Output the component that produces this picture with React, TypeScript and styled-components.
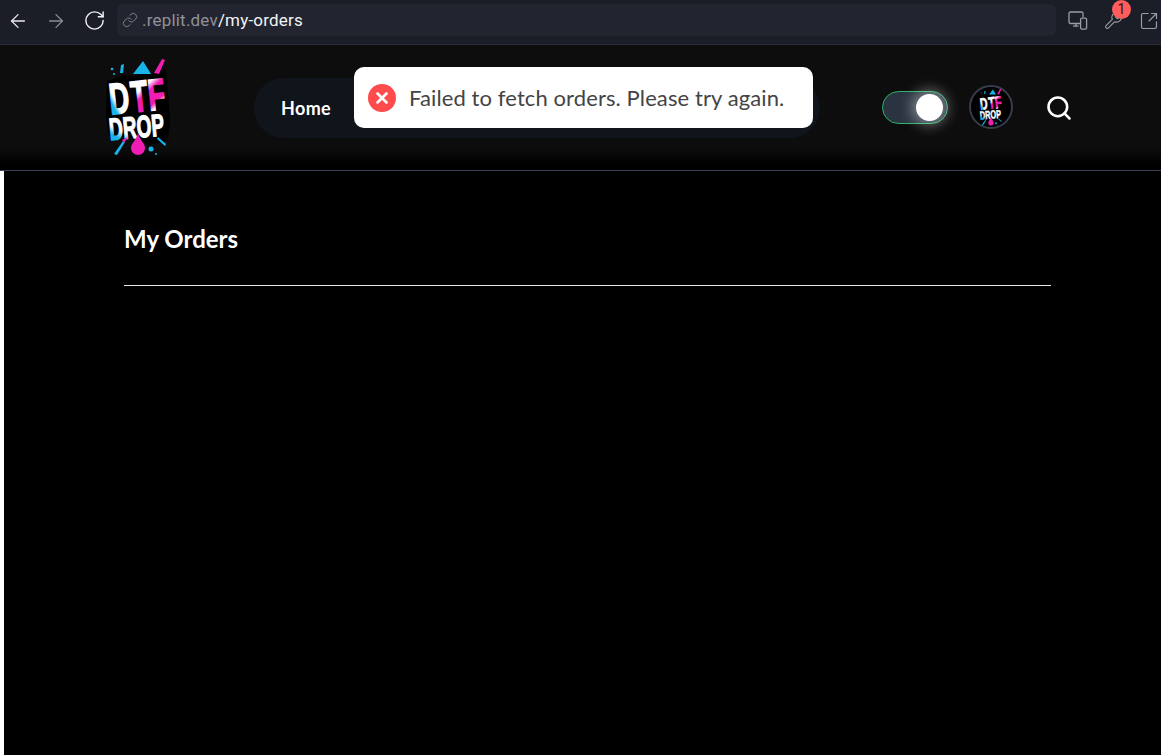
import React from "react";
import styled, { createGlobalStyle } from "styled-components";
import {
  ArrowLeft,
  ArrowRight,
  Link,
  RotateCw,
  Search,
  SquareArrowOutUpRight,
  Wrench,
  X,
} from "lucide-react";

const GlobalStyle = createGlobalStyle`
  html, body {
    margin: 0;
    padding: 0;
    height: 100%;
    background: #000;
    overflow: hidden;
  }
  * {
    box-sizing: border-box;
  }
`;

const logoFont = "'Liberation Sans Narrow', 'Liberation Sans', sans-serif";

const Logo = ({ size, prefix }: { size: number; prefix: string }) => (
  <LogoSvg width={size} height={size * (100 / 68)} viewBox="0 0 68 100">
    <defs>
      <linearGradient id={`${prefix}-d`} x1="1" y1="0" x2="0" y2="1">
        <stop offset="0.62" stopColor="#fff" />
        <stop offset="0.74" stopColor="#19b4ea" />
      </linearGradient>
      <linearGradient id={`${prefix}-t`} x1="0" y1="0" x2="0.5" y2="1">
        <stop offset="0.42" stopColor="#fff" />
        <stop offset="0.55" stopColor="#f01cb4" />
        <stop offset="0.8" stopColor="#f01cb4" />
        <stop offset="0.9" stopColor="#fff" />
      </linearGradient>
      <linearGradient id={`${prefix}-drop`} x1="1" y1="0" x2="0" y2="1">
        <stop offset="0.68" stopColor="#fff" />
        <stop offset="0.8" stopColor="#19b4ea" />
      </linearGradient>
    </defs>
    <polygon
      points="3,24 20,18 30,19 62,12 63,22 66,62 64,84 44,88 34,80 6,84 2,60"
      fill="#000"
    />
    <polygon points="29,17 39,4 47,17" fill="#19b4ea" />
    <polygon points="50,16 58,2 61,3 55,17" fill="#f01cb4" />
    <polygon points="17,8 20,7 19,16 16,16" fill="#19b4ea" />
    <circle cx="8" cy="12" r="1.3" fill="#19b4ea" />
    <circle cx="10" cy="17" r="1" fill="#19b4ea" />
    <g transform="rotate(-6 30 40)">
      <text
        x="5"
        y="55"
        fontFamily={logoFont}
        fontWeight="700"
        fontSize="44"
        textLength="20"
        lengthAdjust="spacingAndGlyphs"
        fill={`url(#${prefix}-d)`}
        stroke={`url(#${prefix}-d)`}
        strokeWidth="1.6"
      >
        D
      </text>
      <text
        x="27"
        y="55"
        fontFamily={logoFont}
        fontWeight="700"
        fontSize="44"
        textLength="34"
        lengthAdjust="spacingAndGlyphs"
        fill={`url(#${prefix}-t)`}
        stroke={`url(#${prefix}-t)`}
        strokeWidth="1.6"
      >
        TF
      </text>
    </g>
    <g transform="rotate(-5 30 70)">
      <text
        x="5"
        y="81"
        fontFamily={logoFont}
        fontWeight="700"
        fontSize="31"
        textLength="55"
        lengthAdjust="spacingAndGlyphs"
        fill={`url(#${prefix}-drop)`}
        stroke={`url(#${prefix}-drop)`}
        strokeWidth="1.3"
      >
        DROP
      </text>
    </g>
    <path d="M34 76 C36 84 41 86 41 91 A7 7 0 0 1 27 91 C27 86 32 84 34 76Z" fill="#f01cb4" />
    <polygon points="10,97 19,84 21,85 13,98" fill="#19b4ea" />
    <polygon points="18,83 24,80 20,86" fill="#f01cb4" />
    <polygon points="54,80 62,87 61,89 53,82" fill="#19b4ea" />
    <circle cx="47" cy="92" r="2.5" fill="#19b4ea" />
    <circle cx="52" cy="97" r="1" fill="#19b4ea" />
  </LogoSvg>
);

const DevicesIcon = () => (
  <svg width="20" height="20" viewBox="0 0 20 20" fill="none" stroke="#9a9da5" strokeWidth="1.3">
    <path d="M13 12.5H2.5a1.5 1.5 0 0 1-1.5-1.5V2.5A1.5 1.5 0 0 1 2.5 1h11A1.5 1.5 0 0 1 15 2.5V6" />
    <path d="M8 12.5V15M5 15.2h5.5" />
    <rect x="12.6" y="7.2" width="6" height="11" rx="1.4" />
  </svg>
);

const App = () => (
  <>
    <GlobalStyle />
    <Page>
      <BrowserBar>
        <NavIcons>
          <ArrowLeft size={22} strokeWidth={1.4} color="#e8e9ec" />
          <ArrowRight size={22} strokeWidth={1.4} color="#8a8d95" />
          <RotateCw size={23} strokeWidth={1.5} color="#f0f1f3" />
        </NavIcons>
        <AddressBar>
          <LinkIcon>
            <Link size={16} strokeWidth={1.5} color="#7d8088" />
          </LinkIcon>
          <Host>.replit.dev</Host>
          <UrlPath>/my-orders</UrlPath>
        </AddressBar>
        <ToolIcons>
          <DevicesIcon />
          <ToolWithBadge>
            <Wrench size={19} strokeWidth={1.4} color="#9a9da5" />
            <Badge>1</Badge>
          </ToolWithBadge>
          <SquareArrowOutUpRight size={20} strokeWidth={1.4} color="#9a9da5" />
        </ToolIcons>
      </BrowserBar>

      <Header>
        <LogoLink>
          <Logo size={68} prefix="main" />
        </LogoLink>
        <NavPill>
          <NavItem>Home</NavItem>
        </NavPill>
        <Toggle>
          <Knob />
        </Toggle>
        <Avatar>
          <Logo size={26} prefix="small" />
        </Avatar>
        <SearchButton>
          <Search size={28} strokeWidth={2.2} color="#fff" />
        </SearchButton>
      </Header>

      <Main>
        <Content>
          <Title>My Orders</Title>
          <Divider />
        </Content>
      </Main>

      <Toast>
        <ToastIcon>
          <X size={18} strokeWidth={3.5} color="#fff" />
        </ToastIcon>
        <ToastText>Failed to fetch orders. Please try again.</ToastText>
      </Toast>
    </Page>
  </>
);

const Page = styled.div`
  display: flex;
  flex-direction: column;
  height: 755px;
  background: #000;
  font-family: Lato, "Noto Sans", sans-serif;
`;

const LogoSvg = styled.svg`
  overflow: visible;
`;

const BrowserBar = styled.div`
  display: flex;
  align-items: center;
  height: 45px;
  padding: 0 0 4px 7px;
  background: #1b1e27;
  border-bottom: 1px solid #2b2e38;
`;

const NavIcons = styled.div`
  display: flex;
  align-items: center;
  gap: 16px;
  width: 110px;
  margin-top: 1px;
  flex-shrink: 0;
`;

const AddressBar = styled.div`
  display: flex;
  align-items: center;
  flex-shrink: 0;
  width: 939px;
  height: 32px;
  margin-top: -1px;
  padding-left: 5px;
  background: #22252f;
  border-radius: 6px;
  font-family: Roboto, sans-serif;
  font-size: 17px;
  letter-spacing: 0.2px;
`;

const LinkIcon = styled.span`
  display: flex;
  margin-right: 4px;
`;

const Host = styled.span`
  color: #8f929a;
`;

const UrlPath = styled.span`
  color: #f2f3f5;
`;

const ToolIcons = styled.div`
  display: flex;
  align-items: center;
  gap: 16px;
  margin: 1px 0 0 12px;
`;

const ToolWithBadge = styled.div`
  position: relative;
  display: flex;
`;

const Badge = styled.span`
  position: absolute;
  top: -11px;
  right: -8px;
  width: 19px;
  height: 19px;
  border-radius: 50%;
  background: #ff5c5c;
  color: #3a1212;
  font-family: Roboto, sans-serif;
  font-size: 14px;
  line-height: 19px;
  text-align: center;
`;

const Header = styled.header`
  display: flex;
  align-items: center;
  flex-shrink: 0;
  height: 126px;
  padding: 0 0 0 104px;
  background: linear-gradient(#0d0d0d 0, #0d0d0d 82%, #000 96%);
  border-bottom: 1px solid #3a4256;
`;

const LogoLink = styled.div`
  display: flex;
  width: 68px;
  margin-top: -1px;
`;

const NavPill = styled.nav`
  display: flex;
  align-items: center;
  width: 566px;
  height: 60px;
  margin: 0 62px 0 82px;
  padding-left: 27px;
  background: #10141b;
  border-radius: 30px;
`;

const NavItem = styled.a`
  color: #fff;
  font-size: 18px;
  font-weight: 700;
  letter-spacing: 0.35px;
`;

const Toggle = styled.div`
  display: flex;
  align-items: center;
  justify-content: flex-end;
  width: 66px;
  height: 33px;
  margin-top: -1px;
  padding-right: 4px;
  background: #2a3340;
  border: 1px solid #27b566;
  border-radius: 17px;
`;

const Knob = styled.span`
  width: 27px;
  height: 27px;
  border-radius: 50%;
  background: #fff;
  box-shadow: 0 0 14px 4px rgba(255, 255, 255, 0.42);
`;

const Avatar = styled.div`
  display: flex;
  align-items: center;
  justify-content: center;
  width: 44px;
  height: 44px;
  margin: -1px 32px 0 21px;
  background: #000;
  border: 2px solid #373d4c;
  border-radius: 50%;
`;

const SearchButton = styled.div`
  display: flex;
`;

const Main = styled.main`
  flex: 1;
  border-left: 4px solid #fff;
  padding: 0 110px 0 120px;
`;

const Content = styled.div`
  padding-top: 52px;
`;

const Title = styled.h1`
  margin: 0;
  color: #fff;
  font-size: 24px;
  font-weight: 700;
  line-height: 32px;
`;

const Divider = styled.hr`
  height: 1px;
  margin: 30px 0 0;
  border: 0;
  background: #e5e7eb;
`;

const Toast = styled.div`
  position: fixed;
  top: 67px;
  left: 354px;
  display: flex;
  align-items: center;
  gap: 13px;
  width: 459px;
  height: 61px;
  padding-left: 14px;
  background: #fff;
  border-radius: 10px;
`;

const ToastIcon = styled.span`
  display: flex;
  align-items: center;
  justify-content: center;
  width: 28px;
  height: 28px;
  border-radius: 50%;
  background: #ff4b4b;
`;

const ToastText = styled.span`
  color: #444;
  font-size: 22px;
  letter-spacing: 0.1px;
`;

export default App;
